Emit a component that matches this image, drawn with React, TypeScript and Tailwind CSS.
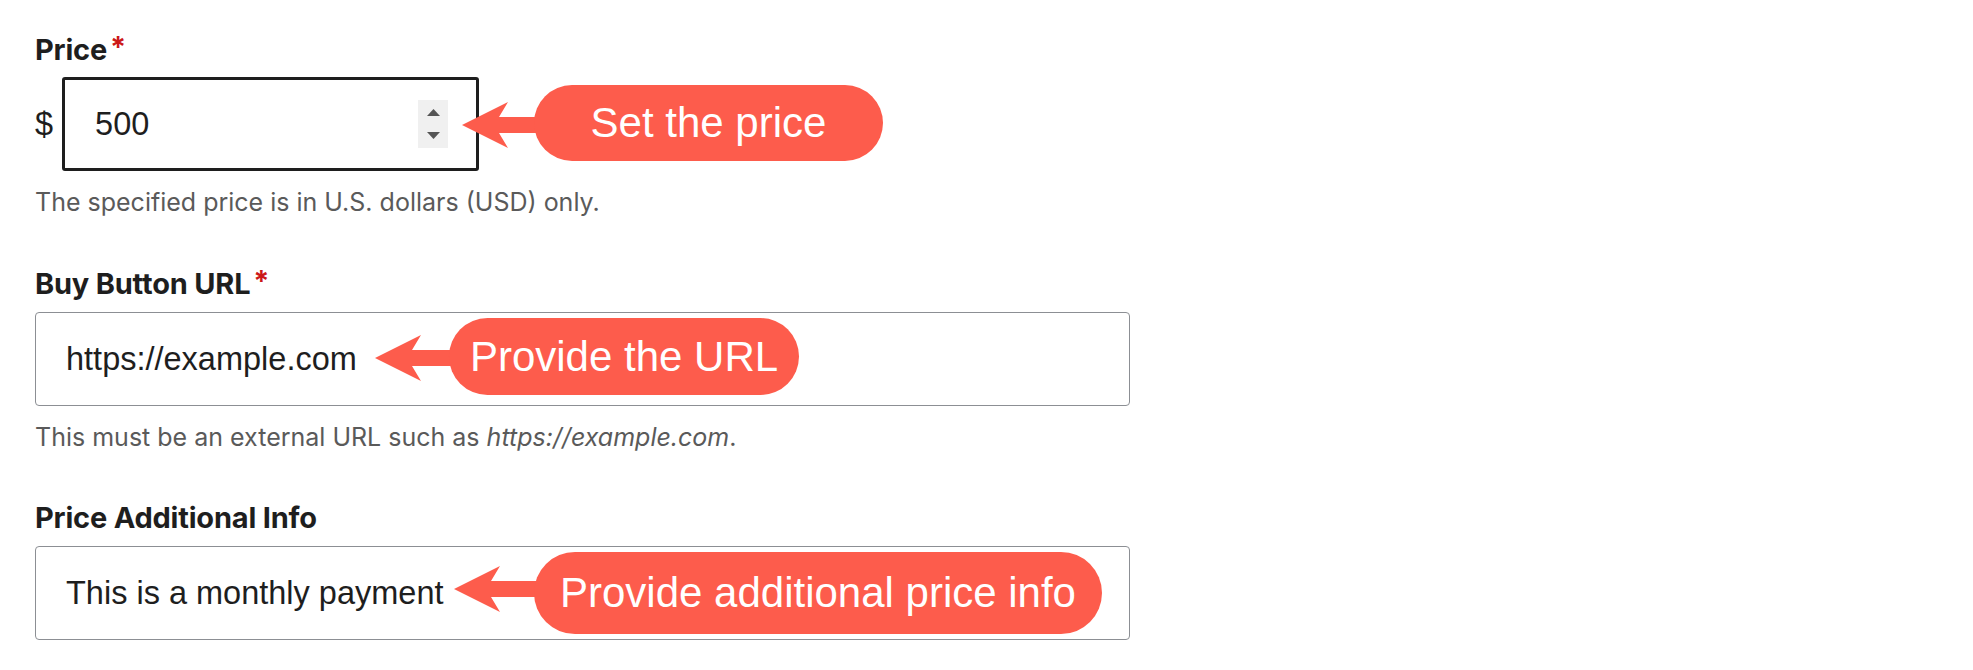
const CORAL = 'bg-[#fd5c4c]';

function Arrow({ w, className = '' }: { w: number; className?: string }) {
  return (
    <svg width={w} height={48} viewBox={`0 0 ${w} 48`} className={`shrink-0 -mr-[4px] ${className}`}>
      <path d={`M0 24 L46 1 L37 16 L${w} 16 L${w} 32 L37 32 L46 47 Z`} fill="#fd5c4c" />
    </svg>
  );
}

function Callout({ text, arrow, pillClass, arrowClass, className }: {
  text: string;
  arrow: number;
  pillClass: string;
  arrowClass?: string;
  className: string;
}) {
  return (
    <div className={`absolute flex items-center ${className}`}>
      <Arrow w={arrow} className={arrowClass} />
      <div
        className={`${CORAL} ${pillClass} rounded-full flex items-center justify-center text-white text-[42px] leading-none font-['Liberation_Sans',Arial,sans-serif] whitespace-nowrap`}
      >
        {text}
      </div>
    </div>
  );
}

function Label({ children, required }: { children: React.ReactNode; required?: boolean }) {
  return (
    <div className="text-[29px] leading-[30px] font-bold text-[#1e1e1e] tracking-[-0.2px]">
      {children}
      {required && <span className="text-[#cc1818] ml-[3px] relative -top-[3px]">*</span>}
    </div>
  );
}

function Help({ children }: { children: React.ReactNode }) {
  return <div className="mt-[16px] text-[25px] leading-[30px] text-[#5a5a5a]">{children}</div>;
}

function Spinner() {
  return (
    <div className="w-[30px] h-[48px] bg-[#f0f0f0] flex flex-col items-center justify-center gap-[16px]">
      <svg width="13" height="7" viewBox="0 0 13 7">
        <path d="M6.5 0 L13 7 L0 7 Z" fill="#555" />
      </svg>
      <svg width="13" height="7" viewBox="0 0 13 7">
        <path d="M0 0 L13 0 L6.5 7 Z" fill="#555" />
      </svg>
    </div>
  );
}

const INPUT_TEXT = "text-[32.5px] text-[#1e1e1e] font-['Liberation_Sans',Arial,sans-serif]";

export default function App() {
  return (
    <div className="w-[1973px] h-[670px] bg-white pl-[35px] pt-[35px] font-['Inter',sans-serif] overflow-hidden">
      {/* Price */}
      <Label required>Price</Label>
      <div className="relative mt-[12px] flex items-center">
        <span className={`${INPUT_TEXT} mr-[9px]`}>$</span>
        <div className="w-[417px] h-[94px] border-[3px] border-[#1e1e1e] rounded-[3px] flex items-center justify-between pl-[30px] pr-[28px]">
          <span className={INPUT_TEXT}>500</span>
          <Spinner />
        </div>
        <Callout
          text="Set the price"
          arrow={76}
          className="left-[427px] top-[8px]"
          arrowClass="mt-[4px]"
          pillClass="w-[349px] h-[76px]"
        />
      </div>
      <Help>The specified price is in U.S. dollars (USD) only.</Help>

      {/* Buy Button URL */}
      <div className="mt-[52px]">
        <Label required>Buy Button URL</Label>
      </div>
      <div className="relative mt-[13px] w-[1095px] h-[94px] border-[1.5px] border-[#8c8f94] rounded-[4px] flex items-center pl-[30px]">
        <span className={INPUT_TEXT}>https://example.com</span>
        <Callout
          text="Provide the URL"
          arrow={78}
          className="left-[339px] top-[5px]"
          arrowClass="mt-[3px]"
          pillClass="w-[350px] h-[77px]"
        />
      </div>
      <Help>
        This must be an external URL such as <em>https://example.com</em>.
      </Help>

      {/* Price Additional Info */}
      <div className="mt-[51px]">
        <Label>Price Additional Info</Label>
      </div>
      <div className="relative mt-[13px] w-[1095px] h-[94px] border-[1.5px] border-[#8c8f94] rounded-[4px] flex items-center pl-[30px]">
        <span className={INPUT_TEXT}>This is a monthly payment</span>
        <Callout
          text="Provide additional price info"
          arrow={84}
          className="left-[418px] top-[5px]"
          arrowClass="-mt-[8px]"
          pillClass="w-[568px] h-[82px]"
        />
      </div>
    </div>
  );
}
